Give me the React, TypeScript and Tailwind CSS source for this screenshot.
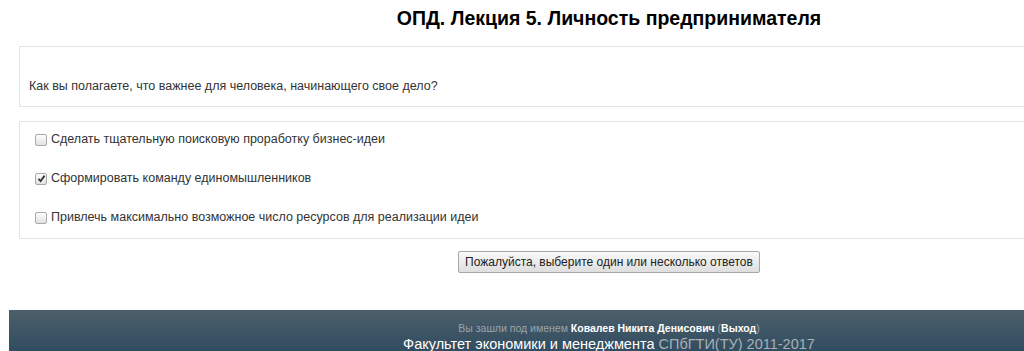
import React from "react";

function Box({ checked }: { checked?: boolean }) {
  return (
    <span className="inline-flex items-center justify-center w-[12px] h-[12px] rounded-[2px] border border-[#a9a9a9] bg-gradient-to-b from-[#fdfdfd] to-[#e2e2e2] shrink-0">
      {checked && (
        <svg width="9" height="9" viewBox="0 0 9 9">
          <path d="M1.5 4.8 L3.6 7 L7.6 1.6" fill="none" stroke="#333" strokeWidth="1.8" />
        </svg>
      )}
    </span>
  );
}

const answers = [
  { text: "Сделать тщательную поисковую проработку бизнес-идеи", checked: false },
  { text: "Сформировать команду единомышленников", checked: true },
  { text: "Привлечь максимально возможное число ресурсов для реализации идеи", checked: false },
];

export default function App() {
  return (
    <div className="w-[1024px] h-[351px] overflow-hidden bg-white font-['Liberation_Sans',Arial,sans-serif] text-[#333]">
      <div className="ml-[19px] w-[1180px]">
        <h2 className="pt-[7px] h-[46px] text-center text-[19.5px] leading-[22px] font-bold text-black">
          ОПД. Лекция 5. Личность предпринимателя
        </h2>
        <div className="h-[61px] border border-[#e3e3e3] flex items-end pb-[10px] pl-[9px] text-[12.5px]">
          Как вы полагаете, что важнее для человека, начинающего свое дело?
        </div>
        <div className="mt-[14px] h-[118px] border border-[#e3e3e3] pl-[15px] pt-[5px] text-[12.5px]">
          {answers.map((a) => (
            <div key={a.text} className="flex items-center gap-[4px] h-[39px] pb-[14px]">
              <Box checked={a.checked} />
              <span>{a.text}</span>
            </div>
          ))}
        </div>
        <div className="mt-[12px] flex justify-center">
          <button className="h-[22px] px-[6px] text-[12px] leading-[20px] text-[#222] border border-[#a6a6a6] rounded-[2px] bg-gradient-to-b from-[#fafafa] to-[#dedede]">
            Пожалуйста, выберите один или несколько ответов
          </button>
        </div>
      </div>
      <div className="mt-[37px] ml-[9px] w-[1200px] h-[60px] bg-gradient-to-b from-[#4c5f6a] to-[#24445c] text-center pt-[10px]">
        <div className="text-[10.5px] leading-[16px] text-[#9aa4aa]">
          Вы зашли под именем <span className="text-white font-bold">Ковалев Никита Денисович</span> (<span className="text-white font-bold">Выход</span>)
        </div>
        <div className="text-[14.5px] leading-[17px] text-white">
          Факультет экономики и менеджмента <span className="text-[#a7b0b5]">СПбГТИ(ТУ) 2011-2017</span>
        </div>
      </div>
    </div>
  );
}
